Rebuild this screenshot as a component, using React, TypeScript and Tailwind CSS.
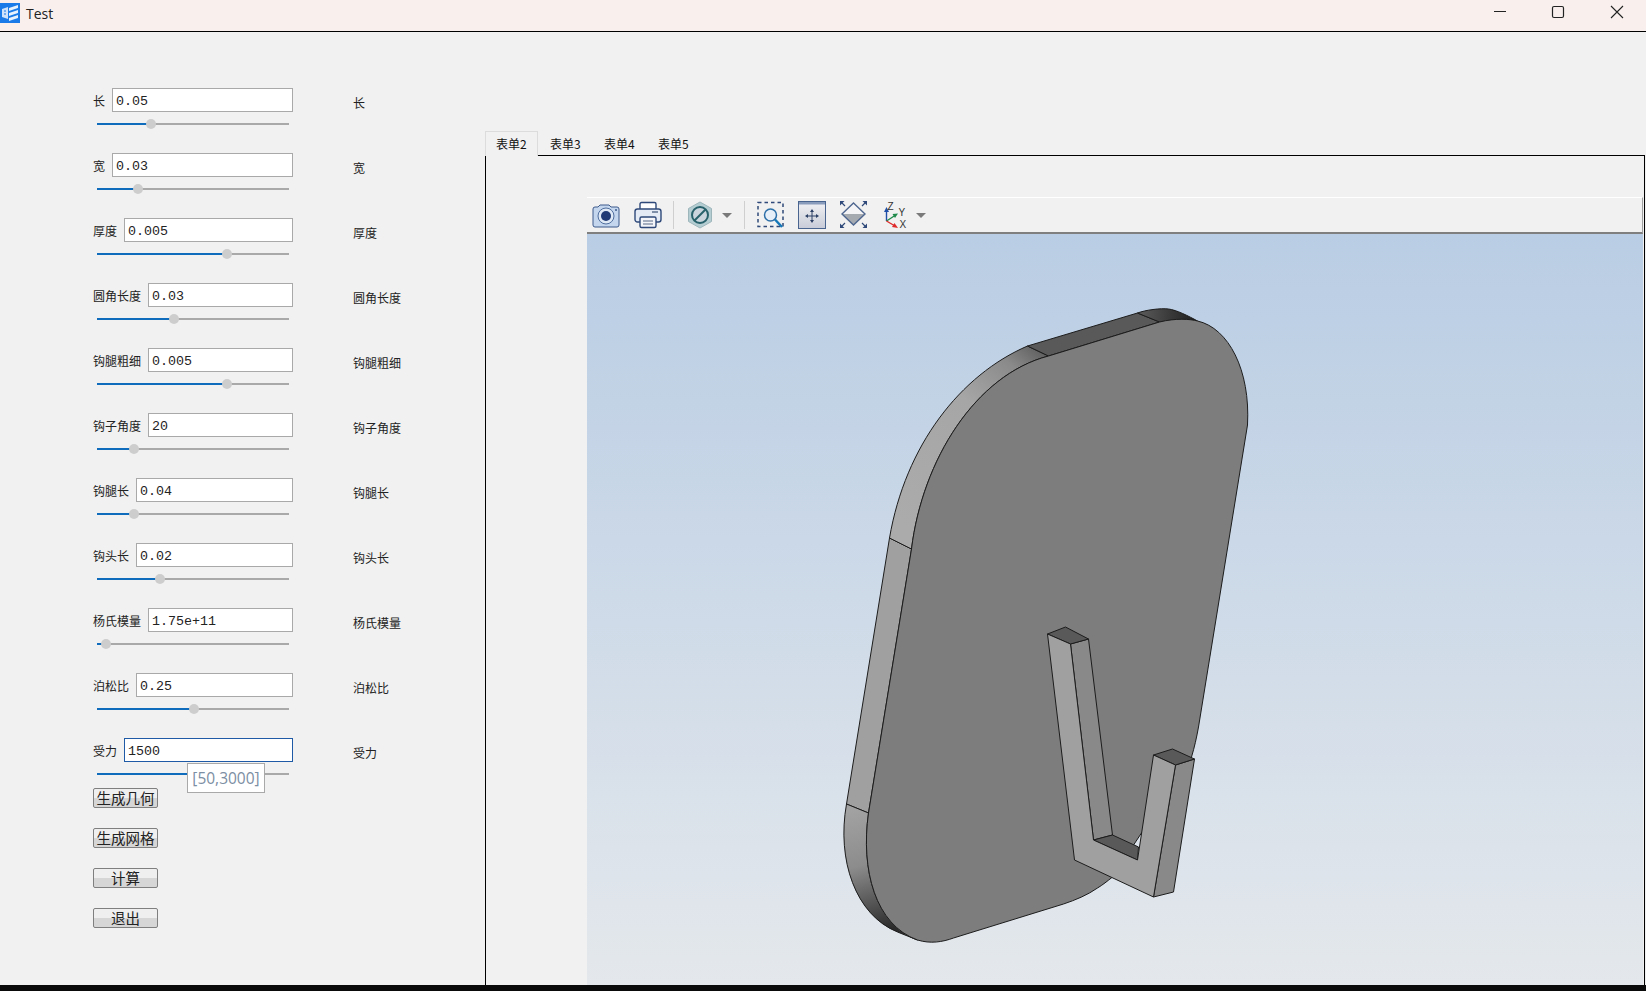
import { useState } from "react";

const fields = [
  { label: "长", value: "0.05", thumb: 54 },
  { label: "宽", value: "0.03", thumb: 41 },
  { label: "厚度", value: "0.005", thumb: 130 },
  { label: "圆角长度", value: "0.03", thumb: 77 },
  { label: "钩腿粗细", value: "0.005", thumb: 130 },
  { label: "钩子角度", value: "20", thumb: 37 },
  { label: "钩腿长", value: "0.04", thumb: 37 },
  { label: "钩头长", value: "0.02", thumb: 63 },
  { label: "杨氏模量", value: "1.75e+11", thumb: 9 },
  { label: "泊松比", value: "0.25", thumb: 97 },
];

const actions = ["生成几何", "生成网格", "计算", "退出"];
const tabs = ["表单2", "表单3", "表单4", "表单5"];

function AppLogo() {
  return (
    <svg viewBox="0 0 20 20" className="h-5 w-5">
      <rect width="20" height="20" fill="#1a7ae8" />
      <path d="M2 6 L8 4 V16 L2 14 Z" fill="#cfe3fa" />
      <path d="M4 8 H6 M4 11 H6" stroke="#1a7ae8" strokeWidth="1.2" />
      <path d="M9 5 L18 2 V5 L9 8 Z M9 10 L18 7 V10 L9 13 Z M9 15 L18 12 V15 L9 18 Z" fill="#e6f1fd" />
    </svg>
  );
}

function WindowControls() {
  return (
    <div className="flex items-center pt-[5px]">
      <svg viewBox="0 0 14 14" className="h-[14px] w-[14px]">
        <path d="M1 6.5 H13" stroke="#222" strokeWidth="1" />
      </svg>
      <svg viewBox="0 0 14 14" className="ml-[44px] h-[14px] w-[14px]">
        <rect x="1.5" y="1.5" width="11" height="11" rx="1.5" fill="none" stroke="#222" strokeWidth="1.2" />
      </svg>
      <svg viewBox="0 0 14 14" className="ml-[45px] mr-[22px] h-[14px] w-[14px]">
        <path d="M1 1 L13 13 M13 1 L1 13" stroke="#222" strokeWidth="1.1" />
      </svg>
    </div>
  );
}

function Slider({ thumb }: { thumb: number }) {
  return (
    <div className="relative ml-[4px] mt-[11px] h-[2px] w-[192px] bg-[#a9a9a9]">
      <div className="h-full bg-[#0f6cbd]" style={{ width: thumb }} />
      <div
        className="absolute top-[-4px] ml-[-5px] h-[10px] w-[10px] rounded-full bg-[#cdcdcd]"
        style={{ left: thumb }}
      />
    </div>
  );
}

function Field({
  label,
  value,
  thumb,
  focused,
}: {
  label: string;
  value: string;
  thumb: number;
  focused?: boolean;
}) {
  return (
    <div className={`flex ${focused ? "h-[50px]" : "h-[65px]"}`}>
      <div className="relative w-[200px]">
        <div className="flex h-[24px] items-center gap-[7px]">
          <span className="pt-[2px] text-[12px] text-[#222]">{label}</span>
          <input
            readOnly
            value={value}
            className={`h-[24px] min-w-0 flex-1 border bg-white pl-[3px] pt-[2px] font-['Liberation_Mono',monospace] text-[13.33px] text-[#222] outline-none ${
              focused ? "border-[#1f5aa6]" : "border-[#a9a9a9]"
            }`}
          />
        </div>
        <Slider thumb={thumb} />
        {focused && (
          <div className="absolute left-[94px] top-[25px] flex h-[30px] w-[78px] items-center justify-center border border-[#a9a9a9] bg-white pt-[2px] font-['Open_Sans',sans-serif] text-[15.5px] text-[#7c8ea3]">
            [50,3000]
          </div>
        )}
      </div>
      <span className="ml-[60px] pt-[6px] text-[12px] text-[#222]">{label}</span>
    </div>
  );
}

function CameraIcon() {
  return (
    <svg viewBox="0 0 28 28" className="h-7 w-7">
      <path d="M1 8 a2 2 0 0 1 2-2 h3 l2-2 h9 l2 2 h6 a2 2 0 0 1 2 2 v16 a2 2 0 0 1-2 2 H3 a2 2 0 0 1-2-2 Z" fill="#c3d6ee" stroke="#3d5a8a" strokeWidth="1" />
      <circle cx="14" cy="15" r="8" fill="#dfe9f6" stroke="#4f6d9e" strokeWidth="1" />
      <circle cx="14" cy="15" r="5" fill="#1f3a75" />
      <circle cx="24" cy="9" r="1" fill="#3d5a8a" />
    </svg>
  );
}

function PrinterIcon() {
  return (
    <svg viewBox="0 0 28 28" className="h-7 w-7">
      <rect x="6" y="1.5" width="16" height="9" rx="1.5" fill="#fff" stroke="#2f4a7a" strokeWidth="1.4" />
      <rect x="1" y="8" width="26" height="13" rx="2.5" fill="#e4ebf5" stroke="#2f4a7a" strokeWidth="1.4" />
      <rect x="18" y="10" width="6" height="2" fill="#7d8ea8" />
      <rect x="6" y="16" width="16" height="10.5" rx="1.5" fill="#f3f5f8" stroke="#2f4a7a" strokeWidth="1.4" />
      <path d="M9 20 H19 M9 23 H19" stroke="#8a97ab" strokeWidth="1.4" />
    </svg>
  );
}

function SectionIcon() {
  return (
    <svg viewBox="0 0 28 28" className="h-7 w-7">
      <path d="M14 1 L25.5 7.5 V20.5 L14 27 L2.5 20.5 V7.5 Z" fill="#b4cdd2" stroke="#9db6bb" strokeWidth="1" />
      <circle cx="14" cy="14" r="8" fill="#c9d4dc" stroke="#27606a" strokeWidth="2" />
      <path d="M8.5 19.5 L19.5 8.5" stroke="#27606a" strokeWidth="2" />
    </svg>
  );
}

function ZoomBoxIcon() {
  return (
    <svg viewBox="0 0 28 28" className="h-7 w-7">
      <rect x="1" y="1.5" width="25" height="24" fill="none" stroke="#2f4a7a" strokeWidth="1.5" strokeDasharray="3.5 3" />
      <circle cx="13.5" cy="14" r="6" fill="#e6eef8" stroke="#2c6fa8" strokeWidth="1.5" />
      <path d="M18 18.5 L25 26" stroke="#1677b8" strokeWidth="2.5" />
    </svg>
  );
}

function FitViewIcon() {
  return (
    <svg viewBox="0 0 28 28" className="h-7 w-7">
      <defs>
        <linearGradient id="fitFill" x1="0" y1="0" x2="0" y2="1">
          <stop offset="0" stopColor="#f1f2f5" />
          <stop offset="1" stopColor="#c8ccd7" />
        </linearGradient>
      </defs>
      <rect x="0.5" y="0.5" width="27" height="27" fill="url(#fitFill)" stroke="#4a6490" strokeWidth="1" />
      <rect x="1" y="1" width="26" height="2.5" fill="#8a9cbb" />
      <path d="M14 10 V20 M9 15 H19" stroke="#2c4066" strokeWidth="1" />
      <path d="M14 8 L12 11 H16 Z M14 22 L12 19 H16 Z M7 15 L10 13 V17 Z M21 15 L18 13 V17 Z" fill="#2c4066" />
    </svg>
  );
}

function DiamondIcon() {
  return (
    <svg viewBox="0 0 28 28" className="h-7 w-7">
      <path d="M13.5 2 L25 13 H2 Z" fill="#f4f4f6" />
      <path d="M13.5 24 L25 13 H2 Z" fill="#a5a9b0" />
      <path d="M13.5 2 L25 13 L13.5 24 L2 13 Z" fill="none" stroke="#4f678f" strokeWidth="1.4" />
      <path d="M0 0 H4.5 L0 4.5 Z M27 0 H22.5 L27 4.5 Z M0 27 H4.5 L0 22.5 Z M27 27 H22.5 L27 22.5 Z" fill="#2f4a7a" />
      <path d="M2 2 L5 5 M25 2 L22 5 M2 25 L5 22 M25 25 L22 22" stroke="#2f4a7a" strokeWidth="1.2" />
    </svg>
  );
}

function AxisIcon() {
  return (
    <svg viewBox="0 0 28 28" className="h-7 w-7">
      <path d="M2.5 20 V9" stroke="#1f4fa8" strokeWidth="1.4" />
      <path d="M2.5 6 L0 11 H5 Z" fill="#1f4fa8" />
      <path d="M2.5 20 L11 14.5" stroke="#1f8a4a" strokeWidth="1.4" />
      <path d="M14 12.5 L8.5 13 L11 17 Z" fill="#1f8a4a" />
      <path d="M2.5 20 L11 25" stroke="#e02b2b" strokeWidth="1.4" />
      <path d="M14 27 L8 26 L10.5 22 Z" fill="#e02b2b" />
      <text x="3.5" y="9" fontSize="10" fill="#333" fontFamily="Liberation Sans, sans-serif">Z</text>
      <text x="14.5" y="15" fontSize="10" fill="#333" fontFamily="Liberation Sans, sans-serif">Y</text>
      <text x="15.5" y="27" fontSize="10" fill="#333" fontFamily="Liberation Sans, sans-serif">X</text>
    </svg>
  );
}

function DropArrow() {
  return (
    <svg viewBox="0 0 10 5" className="h-[5px] w-[10px]">
      <path d="M0 0 H10 L5 5 Z" fill="#7a7a7a" />
    </svg>
  );
}

function Toolbar() {
  return (
    <div className="flex h-[37px] items-center border-b-2 border-r border-t border-b-[#7f7f7f] border-r-[#a0a0a0] border-t-white bg-[#f1f1f1] pl-[5px]">
      <CameraIcon />
      <div className="ml-[14px]">
        <PrinterIcon />
      </div>
      <div className="ml-[11px] h-[28px] w-px bg-[#cfcfcf]" />
      <div className="ml-[12px]">
        <SectionIcon />
      </div>
      <div className="ml-[8px]">
        <DropArrow />
      </div>
      <div className="ml-[12px] h-[28px] w-px bg-[#cfcfcf]" />
      <div className="ml-[12px]">
        <ZoomBoxIcon />
      </div>
      <div className="ml-[13px]">
        <FitViewIcon />
      </div>
      <div className="ml-[14px]">
        <DiamondIcon />
      </div>
      <div className="ml-[16px]">
        <AxisIcon />
      </div>
      <div className="ml-[4px]">
        <DropArrow />
      </div>
    </div>
  );
}

// coordinates are page pixels, the viewBox starts where the viewport does
function PartModel() {
  const line = { stroke: "#1c1c1c", strokeWidth: 1, strokeLinejoin: "round" as const };
  return (
    <svg viewBox="587 234 1055 751" className="block h-full w-full">
      <defs>
        <linearGradient id="leftArc" gradientUnits="userSpaceOnUse" x1="900" y1="520" x2="1045" y2="350">
          <stop offset="0" stopColor="#ababab" />
          <stop offset="0.6" stopColor="#a6a6a6" />
          <stop offset="0.85" stopColor="#8a8a8a" />
          <stop offset="1" stopColor="#5c5c5c" />
        </linearGradient>
        <linearGradient id="topArc" gradientUnits="userSpaceOnUse" x1="1140" y1="316" x2="1195" y2="316">
          <stop offset="0" stopColor="#595959" />
          <stop offset="1" stopColor="#1f1f1f" />
        </linearGradient>
        <linearGradient id="bottomArc" gradientUnits="userSpaceOnUse" x1="850" y1="810" x2="885" y2="930">
          <stop offset="0" stopColor="#a2a2a2" />
          <stop offset="0.45" stopColor="#8c8c8c" />
          <stop offset="1" stopColor="#2c2c2c" />
        </linearGradient>
      </defs>

      {/* plate edge */}
      <path d="M889 538 L846 804 L868 813 L911 549 Z" fill="#a0a0a0" {...line} />
      <path d="M846 804 C836 860 855 915 897 932 L917 940 C875 925 860 870 868 813 Z" fill="url(#bottomArc)" {...line} />
      <path d="M889 538 C905 445 960 375 1027 346 L1048 356 C975 375 922 460 911 549 Z" fill="url(#leftArc)" {...line} />
      <path d="M1027 346 L1137 313 L1159 322 L1048 356 Z" fill="#595959" {...line} />
      <path d="M1137 313 C1145 310 1160 308 1168 309 C1176 310 1188 316 1197 321 L1159 322 Z" fill="url(#topArc)" {...line} />

      {/* plate face */}
      <path
        d="M1048 356 L1159 322 C1175 318 1190 319 1197 321 C1228 328 1250 370 1247 425 L1217 610 L1198 727 C1196 738 1194 747 1191 757 L1112 877 C1107 881 1102 885 1097 888 C1087 895 1075 900 1063 904 L953 938 C942 942 930 944 917 940 C875 925 860 870 868 813 L911 549 C922 460 975 375 1048 356 Z"
        fill="#7d7d7d"
        {...line}
      />

      {/* hook */}
      <path d="M1070 644 L1088 639 L1112 835 L1093 840 Z" fill="#898989" {...line} />
      <path d="M1093 840 L1112 835 L1138 847 L1137 860 Z" fill="#595959" {...line} />
      <path d="M1175 765 L1194 759 L1173 892 L1153 897 Z" fill="#898989" {...line} />
      <path d="M1047 634 L1065 627 L1088 639 L1070 644 Z" fill="#595959" {...line} />
      <path d="M1153 755 L1172 749 L1194 759 L1175 765 Z" fill="#595959" {...line} />
      <path d="M1047 634 L1074 860 L1153 897 L1175 765 L1153 755 L1137 860 L1093 840 L1070 644 Z" fill="#a0a0a0" {...line} />
    </svg>
  );
}

export default function App() {
  const [activeTab] = useState<string>("表单2");

  return (
    <div className="flex h-[991px] w-[1646px] flex-col overflow-hidden bg-[#f1f1f1] font-['Noto_Sans_CJK_SC',sans-serif]">
      <div className="flex h-[32px] items-start justify-between border-b border-black bg-[#f9f0ee]">
        <div className="flex items-center pt-[2px]">
          <AppLogo />
          <span className="ml-[6px] pt-[2px] font-['Open_Sans',sans-serif] text-[14px] leading-[20px] text-[#222]">Test</span>
        </div>
        <WindowControls />
      </div>

      <div className="flex h-[953px]">
        <div className="w-[485px] pl-[93px] pt-[56px]">
          {fields.map((field) => (
            <Field key={field.label} {...field} />
          ))}
          <Field label="受力" value="1500" thumb={96} focused />
          <div className="flex flex-col gap-[20px]">
            {actions.map((action) => (
              <button
                key={action}
                className="h-[20px] w-[65px] rounded-[2px] border border-[#7f7f7f] bg-[linear-gradient(#efefef_50%,#d6d6d6_50%)] text-center text-[14.5px] leading-[18px] text-[#222]"
              >
                {action}
              </button>
            ))}
          </div>
        </div>

        <div className="flex flex-1 flex-col pr-px pt-[99px]">
          <div className="flex h-[24px]">
            {tabs.map((tab) => (
              <div
                key={tab}
                className={`relative z-10 flex h-[25px] items-center text-[12px] text-[#111] ${
                  tab === activeTab
                    ? "w-[53px] border border-b-0 border-[#dcdcdc] bg-[#f1f1f1] pl-[10px]"
                    : "w-[54px] pl-[12px]"
                }`}
              >
                {tab}
              </div>
            ))}
          </div>
          <div className="flex-1 border-l border-r border-t border-black pl-[101px] pr-px pt-[41px]">
            <Toolbar />
            <div className="h-[751px] bg-linear-to-b from-[#b9cde4] to-[#e4e8ec]">
              <PartModel />
            </div>
          </div>
        </div>
      </div>

      <div className="h-[6px] bg-[#0a0a0a]" />
    </div>
  );
}
